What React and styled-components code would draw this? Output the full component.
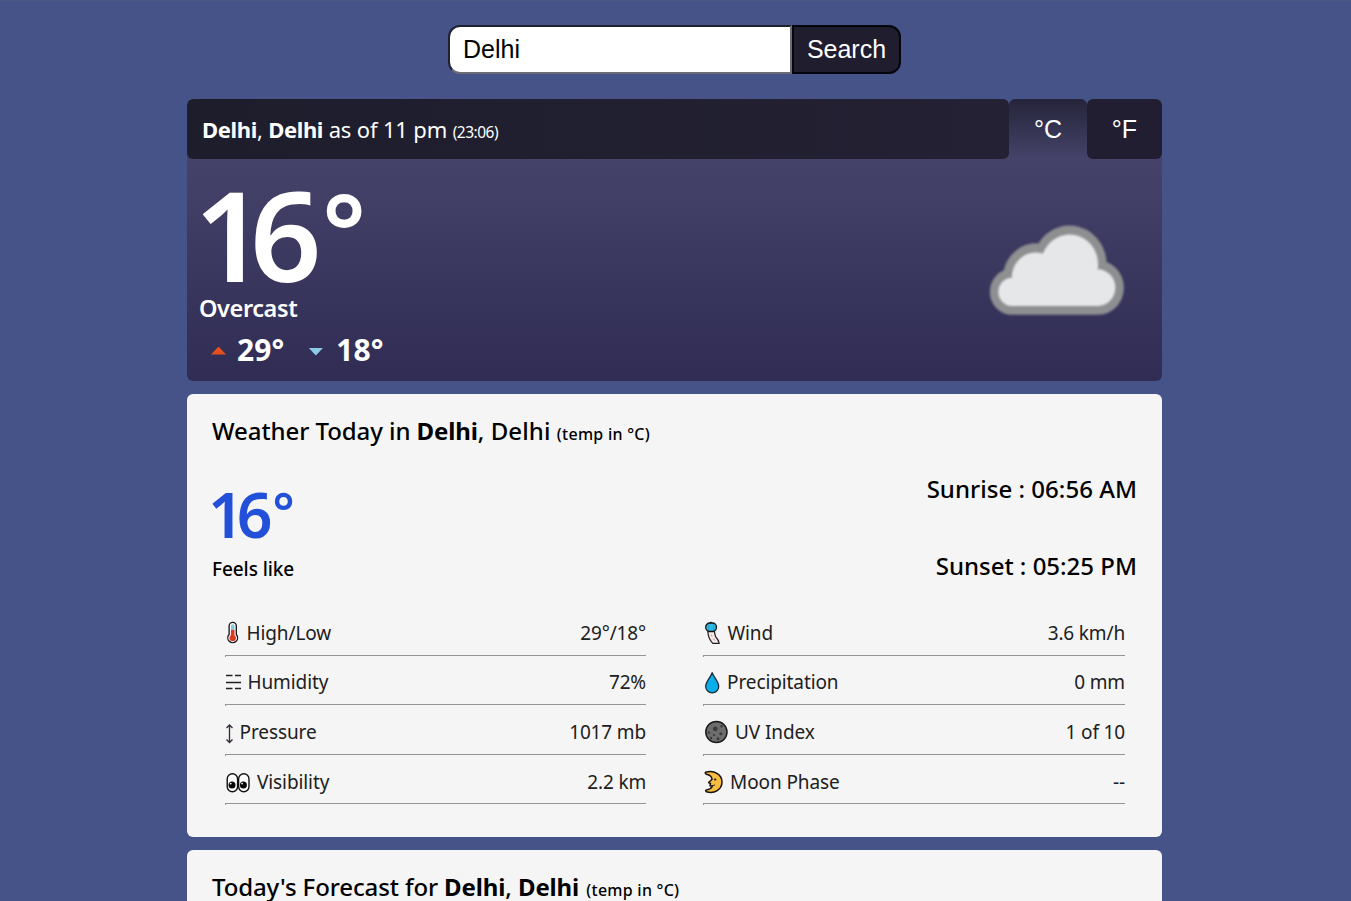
import React from "react";
import styled, { createGlobalStyle } from "styled-components";

const GlobalStyle = createGlobalStyle`
  *, *::before, *::after { box-sizing: border-box; }
  html, body { margin: 0; height: 901px; overflow: hidden; }
  body {
    background: #455388;
    color: #000;
    font-family: "Noto Sans", "Open Sans", sans-serif;
  }
`;

const Page = styled.main`
  width: 1351px;
  height: 901px;
  overflow: hidden;
  padding: 24px 189px 0 187px;
  border-top: 1px solid #4b587e;
  display: flex;
  flex-direction: column;
`;

const SearchForm = styled.form`
  display: flex;
  flex: none;
  justify-content: center;
  height: 49px;
  margin: 0 0 25px;
`;

const SearchInput = styled.input`
  width: 344px;
  height: 49px;
  padding: 0 13px;
  border: 2px solid;
  border-color: #20212f #6c6c76 #6c6c76 #20212f;
  border-radius: 12px 0 0 12px;
  background: #fff;
  color: #000;
  font: 25px "Liberation Sans", sans-serif;
  outline: none;
`;

const SearchButton = styled.button`
  width: 109px;
  height: 49px;
  padding: 0;
  border: 2px solid #05050c;
  border-radius: 0 12px 12px 0;
  background: #1f1d2e;
  color: #fff;
  font: 25px "Liberation Sans", sans-serif;
`;

const Text = styled.span`
  font-size: ${(p) => p.$size}px;
  font-weight: ${(p) => p.$weight || 400};
  line-height: ${(p) => (p.$line ? `${p.$line}px` : "inherit")};
  letter-spacing: ${(p) => p.$track || 0}px;
  color: ${(p) => p.$color || "inherit"};
  white-space: pre;
`;

const Temperature = styled(Text)`
  margin-left: ${(p) => p.$shift}px;
`;

const Condition = styled(Text)`
  margin-left: -1px;
`;

const Kerned = styled.span`
  letter-spacing: ${(p) => p.$track}px;
`;

const Degree = styled.span`
  font-size: 0.83em;
  line-height: 0;
  vertical-align: 0.13em;
`;

const Hero = styled.section`
  height: 282px;
  flex: none;
  margin-bottom: 13px;
  border-radius: 6px;
  background: linear-gradient(#454369 60px, #302c54 100%);
  color: #fff;
  overflow: hidden;
`;

const HeroBar = styled.header`
  display: grid;
  grid-template-columns: 822px 78px 75px;
  grid-template-rows: 60px;
  height: 60px;
  background: linear-gradient(#455388 30px, #454369 30px);
`;

const Place = styled.div`
  padding-left: 15px;
  line-height: 60px;
  border-radius: 6px;
  background: linear-gradient(90deg, #1e1d2c, #232133);
  white-space: pre;
`;

const UnitTab = styled.button`
  padding: 0;
  border: 0;
  border-radius: ${(p) => (p.$active ? "6px 6px 0 0" : "6px")};
  background: ${(p) =>
    p.$active ? "linear-gradient(#25243a, #454369)" : "#201e30"};
  color: #fff;
  font: 25px "Liberation Sans", sans-serif;
`;

const HeroBody = styled.div`
  display: flex;
  justify-content: space-between;
  height: 222px;
  padding: 16px 37px 0 13px;
`;

const Column = styled.div`
  display: flex;
  flex-direction: column;
`;

const Range = styled.div`
  display: flex;
  align-items: center;
  height: 40px;
  margin: 6px 0 0 11px;
`;

const Arrow = styled.i`
  width: 15px;
  height: 8px;
  margin: ${(p) => (p.$up ? 1 : 3)}px ${(p) => p.$after}px 0 ${(p) => p.$before || 0}px;
  background: ${(p) => (p.$up ? "#e5501f" : "#8ccbe8")};
  clip-path: ${(p) =>
    p.$up ? "polygon(50% 0, 100% 100%, 0 100%)" : "polygon(0 0, 100% 0, 50% 100%)"};
`;

const CloudIcon = styled.svg`
  width: 140px;
  height: 104.6px;
  margin-top: 41.5px;
  filter: blur(0.8px);
`;

const Card = styled.section`
  height: ${(p) => p.$height}px;
  flex: none;
  margin-bottom: 13px;
  padding: 20px 25px 0;
  border-radius: 6px;
  background: #f5f5f5;
`;

const CardTitle = styled.h2`
  margin: 0;
  height: 34px;
  line-height: 34px;
  font-size: 24px;
  font-weight: 500;
  white-space: pre;
`;

const Summary = styled.div`
  display: flex;
  justify-content: space-between;
  height: 159px;
`;

const FeelsLike = styled(Column)`
  padding-top: 31px;
  gap: 7px;
`;

const SunTimes = styled(Column)`
  padding-top: 24px;
  gap: 43px;
  align-items: flex-end;
`;

const Details = styled.div`
  display: grid;
  grid-template-columns: 421px 422px;
  column-gap: 57px;
  padding-left: 13px;
`;

const DetailRow = styled.div`
  display: flex;
  align-items: center;
  height: 49.6px;
  padding-top: 2px;
  background:
    linear-gradient(#949496, #949496) 0 calc(100% - 1px) / 100% 1px no-repeat,
    linear-gradient(#949496, #949496) 0 100% / 1px 2px no-repeat;
  color: #202020;
`;

const Glyph = styled.svg`
  width: ${(p) => p.$w}px;
  height: 26px;
  margin-right: ${(p) => p.$gap}px;
  flex: none;
`;

const Value = styled(Text)`
  margin-left: auto;
`;

function Thermometer() {
  return (
    <Glyph $w={16} $gap={5.5} viewBox="0 0 16 26">
      <path d="M4.1 14.500V6a3.600 3.600 0 0 1 7.200 0V14.500a4.900 4.900 0 1 1-7.200 0Z" fill="#fff" stroke="#111" strokeWidth="1.300" />
      <path d="M5.900 6a1.800 1.800 0 0 1 3.600 0V10.500H5.900Z" fill="#8cc7df" />
      <path d="M5.900 10h3.600v5.300a3.300 3.300 0 1 1-3.600 0Z" fill="#dc3b22" />
    </Glyph>
  );
}

function Trigram() {
  return (
    <Glyph $w={17} $gap={5.5} viewBox="0 0 17 26">
      <path d="M1 6.500h6.500M10 6.500H16M1 13.500h15M1 19.500h6.500M10 19.500H16" stroke="#222" strokeWidth="1.400" />
    </Glyph>
  );
}

function UpDown() {
  return (
    <Glyph $w={9} $gap={5.5} viewBox="0 0 9 26">
      <path d="M4.500 6.500v16M1.500 9l3-3 3 3M1.500 20.500l3 3 3-3" fill="none" stroke="#34273a" strokeWidth="1.300" />
    </Glyph>
  );
}

function Eyes() {
  return (
    <Glyph $w={26} $gap={6} viewBox="0 0 26 26">
      {[2.2, 13.6].map((x) => (
        <g key={x}>
          <rect x={x} y="4.800" width="10.400" height="18" rx="5.200" fill="#fff" stroke="#111" strokeWidth="1.400" />
          <circle cx={x + 4.8} cy="16" r="3.500" fill="#080808" />
          <circle cx={x + 3.5} cy="14.600" r="0.900" fill="#fff" />
        </g>
      ))}
    </Glyph>
  );
}

function WindFace() {
  return (
    <Glyph $w={18} $gap={6.5} viewBox="0 0 18 26">
      <path d="M4.800 11.600c.3 4.500 1.900 8.600 5 11.800h6.400c-.4-2.400-1.600-4.600-3.400-6.400-.8-1.600-1.200-3.400-1.300-5.400Z" fill="#f7e9ea" stroke="#222" strokeWidth="1.200" strokeLinejoin="round" />
      <path d="M8 14.500l1.200 2M10.200 18.500l1.500 2" stroke="#d48a8a" strokeWidth="1" />
      <path d="M6.500 3 8 1.600 9.600 3Z" fill="#111" />
      <rect x="2.700" y="3" width="10.800" height="8.400" rx="4.100" fill="#2fbbe6" stroke="#111" strokeWidth="1.300" />
      <path d="M5.600 3.600v7.200M10.600 3.600v7.200" stroke="#1d8fb5" strokeWidth=".6" />
    </Glyph>
  );
}

function Droplet() {
  return (
    <Glyph $w={18} $gap={6} viewBox="0 0 18 26">
      <path d="M9.200 3.700C7.800 7.900 2.700 12.500 2.700 17.500a6.500 6.300 0 0 0 13 0C15.700 12.500 10.600 7.900 9.200 3.700Z" fill="#09aeea" stroke="#1c2b38" strokeWidth="1.300" strokeLinejoin="round" />
    </Glyph>
  );
}

function DarkMoon() {
  return (
    <Glyph $w={26} $gap={6} viewBox="0 0 26 26">
      <circle cx="13.400" cy="13" r="10.600" fill="#6d6d6d" stroke="#1b1b1b" strokeWidth="1.500" />
      <circle cx="12.300" cy="9.800" r="2.400" fill="#3c3c3c" />
      <g fill="#3a3a3a">
        <circle cx="17.800" cy="14.800" r="1.500" />
        <circle cx="11" cy="16" r="1.100" />
        <circle cx="6" cy="13.600" r="1.200" />
        <circle cx="15" cy="19.800" r="1.500" />
        <circle cx="18.600" cy="7.300" r="1.300" />
        <circle cx="8" cy="19" r="1.200" />
      </g>
    </Glyph>
  );
}

function CrescentFace() {
  return (
    <Glyph $w={21} $gap={6} viewBox="0 0 21 26">
      <path d="M2.500 3.300C11 .6 19 5.500 19 13s-7.500 12.200-15.600 9.700c-.9-.4-1-1.500 0-1.700 3-.5 4.900-1.700 5.800-3.500l-2.300-1 .7-1.800-2-1.200 3.500-3.200C8.700 7.600 6.600 6 3.600 5.300c-1.100-.3-1.800-1.400-1.100-2Z" fill="#f7bd43" stroke="#17130c" strokeWidth="1.500" strokeLinejoin="round" />
      <circle cx="12.200" cy="10.500" r="1.100" fill="#17130c" />
      <path d="M9.200 16.500c1.300.2 2.200-.2 2.900-1" fill="none" stroke="#17130c" />
    </Glyph>
  );
}

const details = [
  [Thermometer, "High/Low", "29°/18°"],
  [WindFace, "Wind", "3.6 km/h"],
  [Trigram, "Humidity", "72%"],
  [Droplet, "Precipitation", "0 mm"],
  [UpDown, "Pressure", "1017 mb"],
  [DarkMoon, "UV Index", "1 of 10"],
  [Eyes, "Visibility", "2.2 km"],
  [CrescentFace, "Moon Phase", "--"],
];

const cloudShape =
  "M27 85A13.5 13.5 0 0 1 26.7 58A24 24 0 0 1 58 35A28.5 28.5 0 0 1 112.7 50A17.5 17.5 0 0 1 113 85Z";

export default function App() {
  return (
    <Page>
      <GlobalStyle />
      <SearchForm onSubmit={(e) => e.preventDefault()}>
        <SearchInput defaultValue="Delhi" aria-label="City" />
        <SearchButton>Search</SearchButton>
      </SearchForm>

      <Hero>
        <HeroBar>
          <Place>
            <Text $size={22} $weight={700} $track={-0.35}>Delhi</Text>
            <Text $size={22} $track={-0.2}>, </Text>
            <Text $size={22} $weight={700} $track={-0.35}>Delhi</Text>
            <Text $size={22} $track={-0.16}> as of 11 pm </Text>
            <Text $size={15.5} $track={-0.5}>(23:06)</Text>
          </Place>
          <UnitTab $active>°C</UnitTab>
          <UnitTab>°F</UnitTab>
        </HeroBar>
        <HeroBody>
          <Column>
            <Temperature $size={125} $weight={600} $line={117} $shift={-6}>
              <Kerned $track={-15.5}>1</Kerned>
              <Kerned $track={0.5}>6</Kerned>
              <Degree>°</Degree>
            </Temperature>
            <Condition $size={23.5} $weight={600} $line={32} $track={-0.4}>Overcast</Condition>
            <Range>
              <Arrow $up $after={11} />
              <Text $size={30} $weight={700} $line={40} $track={0.1}>29°</Text>
              <Arrow $before={24} $after={13} />
              <Text $size={30} $weight={700} $line={40}>18°</Text>
            </Range>
          </Column>
          <CloudIcon viewBox="0 0 140 100" preserveAspectRatio="none">
            <path d={cloudShape} fill="#8e8f91" stroke="#8e8f91" strokeWidth="17" strokeLinejoin="round" />
            <path d={cloudShape} fill="#e6e7e9" />
          </CloudIcon>
        </HeroBody>
      </Hero>

      <Card $height={443}>
        <CardTitle>
          <Text $size={24} $weight={500} $track={-0.07}>Weather Today in </Text>
          <Text $size={24} $weight={700} $track={-0.15}>Delhi</Text>
          <Text $size={24} $weight={500} $track={0.1}>, Delhi </Text>
          <Text $size={16} $weight={500} $track={0.25}>(temp in °C)</Text>
        </CardTitle>
        <Summary>
          <FeelsLike>
            <Temperature $size={62.5} $weight={600} $line={70} $shift={-4} $color="#2350d8">
              <Kerned $track={-7}>1</Kerned>
              <Kerned $track={0}>6</Kerned>
              <Degree>°</Degree>
            </Temperature>
            <Text $size={19} $weight={500} $line={26} $track={-0.08}>Feels like</Text>
          </FeelsLike>
          <SunTimes>
            <Text $size={24} $weight={500} $line={34} $track={0.03}>Sunrise : 06:56 AM</Text>
            <Text $size={24} $weight={500} $line={34}>Sunset : 05:25 PM</Text>
          </SunTimes>
        </Summary>
        <Details>
          {details.map(([Icon, label, value]) => (
            <DetailRow key={label}>
              <Icon />
              <Text $size={19} $track={-0.1}>{label}</Text>
              <Value $size={19} $track={-0.15}>{value}</Value>
            </DetailRow>
          ))}
        </Details>
      </Card>

      <Card $height={200}>
        <CardTitle>
          <Text $size={24} $weight={500} $track={-0.12}>Today's Forecast for </Text>
          <Text $size={24} $weight={700} $track={-0.15}>Delhi</Text>
          <Text $size={24} $weight={500}>, </Text>
          <Text $size={24} $weight={700} $track={-0.15}>Delhi</Text>
          <Text $size={24} $weight={500} $track={1}> </Text>
          <Text $size={16} $weight={500} $track={0.25}>(temp in °C)</Text>
        </CardTitle>
      </Card>
    </Page>
  );
}
